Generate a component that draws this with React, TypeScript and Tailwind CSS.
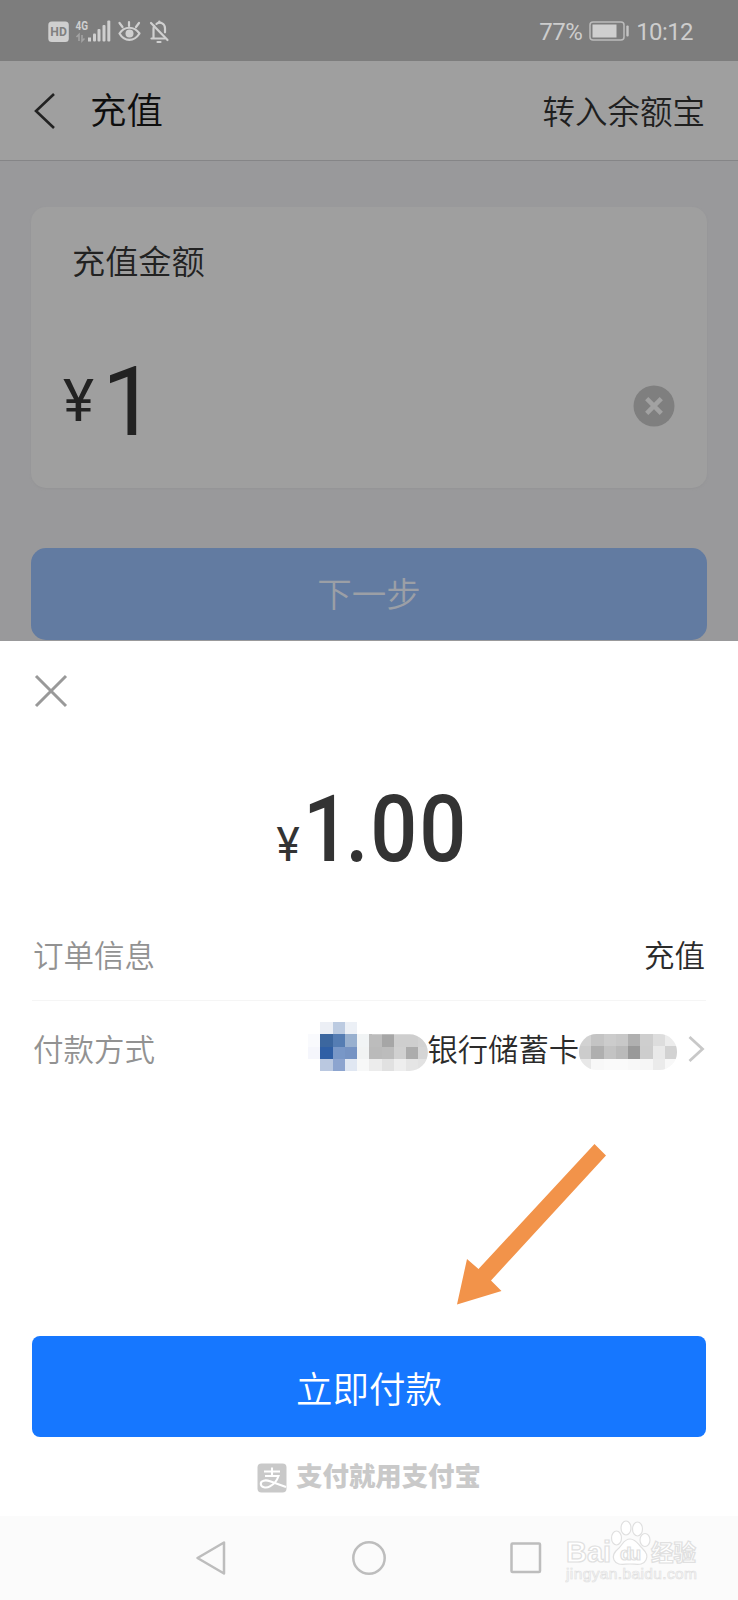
const cjk = "font-['Roboto','Noto_Sans_CJK_SC',sans-serif] font-[350]";

function StatusBar() {
  return (
    <div className="flex h-[61px] items-center bg-[#7d7d7d] pl-12 pr-[45px] font-normal text-[#cdcdcd]">
      <svg width="122" height="30" viewBox="0 -4 122 30" className="overflow-visible">
        <rect x="0.3" y="1.5" width="20.5" height="20.5" rx="3.5" fill="#cfcfcf" />
        <text x="10.6" y="16.4" textAnchor="middle" fontFamily="Roboto" fontWeight="700" fontSize="13" fill="#808080" textLength="16.500" lengthAdjust="spacingAndGlyphs">HD</text>
        <text x="27.5" y="10" fontFamily="Roboto" fontWeight="700" fontSize="12.5" fill="#cfcfcf" textLength="12.500" lengthAdjust="spacingAndGlyphs">4G</text>
        <path d="M28.5 17l2.500-2.500V21M34 15v6l2.500-2.500" stroke="#a3a3a3" strokeWidth="1.600" fill="none" />
        <g fill="#cfcfcf">
          <rect x="40" y="17.500" width="3" height="4" />
          <rect x="45" y="13.500" width="3" height="8" rx="1" />
          <rect x="49.500" y="9" width="3" height="12.500" rx="1" />
          <rect x="54.500" y="5" width="3" height="16.500" rx="1" />
          <rect x="59.300" y="0.500" width="3" height="21" rx="1" />
        </g>
        <g stroke="#d0d0d0" strokeWidth="2.200" fill="none" strokeLinecap="round">
          <path d="M71.500 13.500C76.500 5.800 86 5.800 91.500 13.500C86 22 76.500 22 71.500 13.500Z" strokeLinejoin="round" />
          <path d="M81 2v4M71.500 3l3 4M91 3l-3 4" />
          <path d="M103 3l16.500 17" />
          <path d="M103.500 18.500h13M105.500 18v-9c0-1 .2-2 .7-3M108.500 3.800c4-2.600 8.500 0 8.500 4.500v4" />
          <path d="M111.300 1.500v1M109.500 22h3" />
        </g>
        <circle cx="81.500" cy="13.500" r="4" fill="#d0d0d0" />
      </svg>
      <div className="flex-1" />
      <span className="mt-0.5 font-['Roboto',sans-serif] text-[24px] leading-none tracking-[-0.5px]">77%</span>
      <svg width="40" height="20" viewBox="0 0 40 20" className="ml-[7px] mr-[7px] mt-px">
        <rect x="1" y="1" width="34" height="18" rx="3" fill="none" stroke="#bcbcbc" strokeWidth="1.500" />
        <rect x="3.500" y="3.500" width="24" height="13" fill="#cfcfcf" />
        <rect x="37.300" y="4.500" width="2.400" height="11" rx="1" fill="#c4c4c4" />
      </svg>
      <span className="mt-0.5 font-['Roboto',sans-serif] text-[24px] leading-none tracking-[-0.6px]">10:12</span>
    </div>
  );
}

function Header() {
  return (
    <header className="flex h-[100px] items-center border-b border-[#858587] bg-[#9f9f9f] pl-[33px] pr-[33px]">
      <svg width="24" height="38" viewBox="0 0 24 38" fill="none" stroke="#222" strokeWidth="2.600">
        <path d="M21 2L3 19l18 17" />
      </svg>
      <h1 className="ml-[33px] mt-[3px] text-[36.500px] leading-none text-[#0e0e0e]">充值</h1>
      <span className="ml-auto mt-[6px] text-[32.500px] leading-none text-[#1f1f1f]">转入余额宝</span>
    </header>
  );
}

function AmountCard() {
  return (
    <section className="mx-[31px] mt-[46px] flex h-[281px] flex-col rounded-[15px] bg-[#9f9f9f] shadow-[0_1px_2px_#949496]">
      <h2 className="ml-[41px] mt-[39px] text-[33.2px] leading-none text-[#222]">充值金额</h2>
      <div className="mt-[73px] flex h-[100px] items-center pl-8 pr-8 font-['Roboto',sans-serif] font-normal text-[#222]">
        <span className="mb-[3px] text-[59px] leading-none">¥</span>
        <span className="ml-2 text-[96px] leading-none">1</span>
        <svg width="42" height="42" viewBox="0 0 42 42" className="ml-auto mt-2">
          <circle cx="21" cy="21" r="20.500" fill="#7f7f7f" />
          <path d="M13.700 13.700l14.600 14.600M28.300 13.700L13.700 28.300" stroke="#a2a2a2" strokeWidth="4.500" />
        </svg>
      </div>
    </section>
  );
}

type Cell = [number, number, string];

const logoCells: Cell[] = [
  [1, 0, "#eceff5"], [2, 0, "#bccbe1"], [3, 0, "#ecf0f6"],
  [0, 1, "#f9fafd"], [1, 1, "#3c679f"], [2, 1, "#557db3"], [3, 1, "#98b0cf"], [4, 1, "#f1f4f5"],
  [5, 1, "#bcbcbc"], [6, 1, "#a6a6a6"], [7, 1, "#cecece"], [8, 1, "#cecece"], [9, 1, "#d2d2d2"],
  [0, 2, "#f5f6fc"], [1, 2, "#2f5fa5"], [2, 2, "#7897c7"], [3, 2, "#7593c3"], [4, 2, "#f1f3f3"],
  [5, 2, "#bababa"], [6, 2, "#bcbcbc"], [7, 2, "#d0d0d0"], [8, 2, "#acacac"], [9, 2, "#d5d5d5"],
  [1, 3, "#bac8e0"], [2, 3, "#8ca4cf"], [3, 3, "#e0e7f2"], [4, 3, "#f7f8f8"],
  [5, 3, "#ececec"], [6, 3, "#e1e1e1"], [7, 3, "#eeeeee"], [8, 3, "#e5e5e5"], [9, 3, "#e2e2e2"],
];

const numberCells: Cell[] = [
  [0, 0, "#d2d2d2"], [1, 0, "#c4c4c4"], [2, 0, "#cccccc"], [3, 0, "#c8c8c8"], [4, 0, "#b0b0b0"], [5, 0, "#cecece"], [6, 0, "#dddddd"], [7, 0, "#ececec"],
  [0, 1, "#cccccc"], [1, 1, "#afafaf"], [2, 1, "#c3c3c3"], [3, 1, "#bababa"], [4, 1, "#999999"], [5, 1, "#cdcdcd"], [6, 1, "#e9e9e9"], [7, 1, "#d2d2d2"],
  [0, 2, "#e8e8e8"], [1, 2, "#f8f8f8"], [2, 2, "#fafafa"], [3, 2, "#fafafa"], [4, 2, "#f8f8f8"], [5, 2, "#f6f6f6"], [6, 2, "#ebebeb"], [7, 2, "#f8f8f8"],
];

function Mosaic({ cells }: { cells: Cell[] }) {
  return (
    <g shapeRendering="crispEdges">
      {cells.map(([x, y, fill]) => (
        <rect key={`${x}-${y}`} x={x * 12.25} y={y * 12.25} width="12.4" height="12.4" fill={fill} />
      ))}
    </g>
  );
}

function PaymentSheet() {
  return (
    <section className="flex h-[875px] flex-col bg-white px-8">
      <svg width="38" height="38" viewBox="0 0 38 38" className="mt-[31px] shrink-0" fill="none" stroke="#999" strokeWidth="3">
        <path d="M4 4l30 30M34 4L4 34" />
      </svg>
      <div className="mt-[70px] flex h-[100px] shrink-0 items-baseline justify-center font-['Roboto',sans-serif] font-medium text-[#333]">
        <span className="origin-right scale-x-90 text-[49px] font-normal leading-[100px]">¥</span>
        <span className="ml-[3px] w-[161px] origin-left scale-x-90 whitespace-nowrap text-[92px] leading-[100px]">
          <span className="tracking-[-5px]">1</span>
          <span className="tracking-[2px]">.00</span>
        </span>
      </div>
      <div className="mt-[35px] flex h-[86px] shrink-0 items-center justify-between border-b border-[#f5f5f5] px-px text-[30.500px] leading-none">
        <span className="text-[#929292]">订单信息</span>
        <span className="text-[#2b2b2b]">充值</span>
      </div>
      <div className="flex h-[100px] shrink-0 items-center px-px text-[30.500px] leading-none">
        <span className="text-[#929292]">付款方式</span>
        <svg width="120" height="49" viewBox="0 0 120 49" className="-mt-2.5 ml-auto">
          <defs>
            <clipPath id="bank-mask">
              <path d="M0 0H64V12.250H101.500A18 18 0 0 1 101.500 49H0Z" />
            </clipPath>
          </defs>
          <g clipPath="url(#bank-mask)"><Mosaic cells={logoCells} /></g>
        </svg>
        <span className="whitespace-nowrap text-[30.300px] text-[#2b2b2b]">银行储蓄卡</span>
        <svg width="98" height="36" viewBox="0 0 98 36" className="mt-0.5">
          <defs>
            <clipPath id="number-mask"><rect width="98" height="36" rx="17.500" /></clipPath>
          </defs>
          <g clipPath="url(#number-mask)"><Mosaic cells={numberCells} /></g>
        </svg>
        <svg width="17" height="28" viewBox="0 0 17 28" className="-mt-1 ml-[11px]" fill="none" stroke="#c8c8c8" strokeWidth="2.800">
          <path d="M1.500 2L14.500 14L1.500 26" />
        </svg>
      </div>
      <svg width="152" height="164" viewBox="0 0 152 164" className="ml-[424px] mt-[42px] shrink-0">
        <path d="M138.500 1L150 12.500L35 137.500L45.500 148L1 161.500L11 116L22.500 126Z" fill="#f2934a" />
      </svg>
      <button className="mt-[29px] flex h-[101px] w-full shrink-0 items-center justify-center rounded-lg bg-[#1677ff] pt-2.5 text-[36.500px] leading-none text-white">立即付款</button>
      <div className="mt-[25px] flex h-[31px] shrink-0 items-center justify-center text-[#c9c9c9]">
        <svg width="30" height="30" viewBox="0 0 30 30">
          <rect x="0.500" y="0.500" width="29" height="29" rx="4" fill="#c9c9c9" />
          <path d="M7 8.500h16M15 4.500v8.500M8 13h13.500C20 17.500 16.500 21.500 13 23.300C9 25.500 4 24.500 3.800 21C3.600 17.500 8.500 16.500 13 18.200L29 24" fill="none" stroke="#fff" strokeWidth="2.100" />
        </svg>
        <span className="ml-[9px] text-[26.400px] font-black leading-none">支付就用支付宝</span>
      </div>
    </section>
  );
}

function Watermark() {
  return (
    <svg width="138" height="70" viewBox="0 0 138 70" className="ml-[22px] mt-[-13px]">
      <g fill="#fff" stroke="#e0e0e0" strokeWidth="1.200">
        <text x="1" y="45" fontFamily="Liberation Sans" fontWeight="700" fontSize="29" textLength="45">Bai</text>
        <ellipse cx="51.500" cy="21" rx="5" ry="7" />
        <ellipse cx="61" cy="11" rx="5" ry="7" />
        <ellipse cx="72.500" cy="12" rx="5" ry="7" />
        <ellipse cx="80" cy="23" rx="5" ry="6.500" />
        <path d="M65 22c6 0 8 5 12 9c5 5 6 8 4 12c-3 6-9 4-16 4s-13 2-16-4c-2-4 0-8 5-12c4-4 5-9 11-9z" />
        <text x="55" y="43" fontFamily="Liberation Sans" fontWeight="700" fontSize="19" textLength="21">du</text>
        <text x="86" y="44" fontFamily="Noto Sans CJK SC" fontWeight="700" fontSize="22.500">经验</text>
        <text x="1" y="62" fontFamily="Liberation Sans" fontSize="15.500" strokeWidth=".7" textLength="131">jingyan.baidu.com</text>
      </g>
    </svg>
  );
}

function NavigationBar() {
  return (
    <nav className="flex h-[84px] items-center bg-[#fbfbfb] pl-[195px]">
      <svg width="348" height="36" viewBox="0 0 348 36" fill="none" stroke="#bdbdbd" strokeWidth="2.500" strokeLinejoin="round">
        <path d="M2.500 18L29 2.500v31Z" />
        <circle cx="174" cy="18" r="15.700" />
        <rect x="316.500" y="3.500" width="28.500" height="28.500" rx="1" />
      </svg>
      <Watermark />
    </nav>
  );
}

export default function App() {
  return (
    <main className={`${cjk} flex h-[1600px] w-[738px] flex-col overflow-hidden bg-white`}>
      <div className="flex h-[641px] flex-col bg-[#99999b]">
        <StatusBar />
        <Header />
        <AmountCard />
        <button className="mx-[31px] mt-[60px] flex h-[92px] shrink-0 items-center justify-center rounded-[15px] bg-[#627ba1] pt-[3px] text-[34.500px] leading-none text-[#9b9fa6]">下一步</button>
      </div>
      <PaymentSheet />
      <NavigationBar />
    </main>
  );
}
